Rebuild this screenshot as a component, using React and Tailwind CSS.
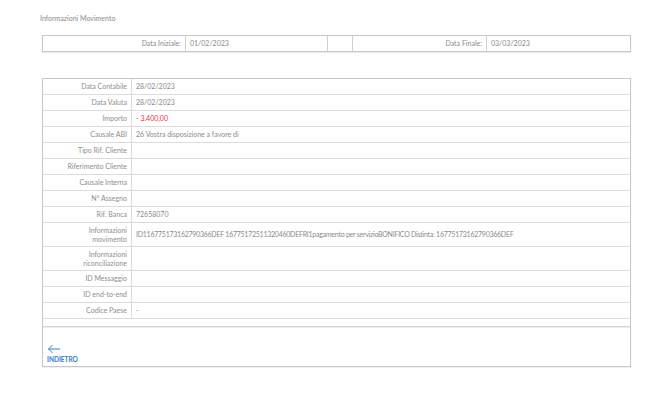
import React from "react"

const rows = [
  { label: "Data Contabile", value: "28/02/2023" },
  { label: "Data Valuta", value: "28/02/2023" },
  { label: "Importo", value: "- 3.400,00", red: true },
  { label: "Causale ABI", value: "26 Vostra disposizione a favore di" },
  { label: "Tipo Rif. Cliente", value: "" },
  { label: "Riferimento Cliente", value: "" },
  { label: "Causale Interna", value: "" },
  { label: "N° Assegno", value: "" },
  { label: "Rif. Banca", value: "72658070" },
  {
    label: ["Informazioni", "movimento"],
    value: "ID116775173162790366DEF 16775172511320460DEFRI1pagamento per servizioBONIFICO Distinta: 16775173162790366DEF",
    tight: true,
  },
  { label: ["Informazioni", "riconciliazione"], value: "" },
  { label: "ID Messaggio", value: "" },
  { label: "ID end-to-end", value: "" },
  { label: "Codice Paese", value: "-" },
]

function Row({ row }) {
  const double = Array.isArray(row.label)
  return (
    <div className={`flex border-b border-[#dcdcdc] ${double ? "h-[24px]" : "h-[16px]"}`}>
      <div className="w-[89px] shrink-0 border-r border-[#dcdcdc] flex flex-col items-end justify-center pr-[4px] text-right leading-[9px] text-[#8e8e8e]">
        {double ? row.label.map((l) => <span key={l}>{l}</span>) : <span>{row.label}</span>}
      </div>
      <div
        className={`flex items-center pl-[4px] ${row.red ? "text-[#e0383a]" : "text-[#8a8a8a]"} ${
          row.tight ? "tracking-[-0.25px]" : ""
        }`}
      >
        {row.value}
      </div>
    </div>
  )
}

export default function App() {
  return (
    <div className="w-[660px] h-[396px] bg-white text-[7px]" style={{ fontFamily: "Lato, 'Open Sans', sans-serif" }}>
      <div className="pl-[40px] pt-[13px] h-[35px] text-[#8a8a8a]">Informazioni Movimento</div>

      <div className="ml-[42px] w-[589px] h-[17px] flex border border-[#c8c8c8] shadow-[0_1px_1px_rgba(0,0,0,0.08)] text-[#8a8a8a]">
        <div className="w-[143px] border-r border-[#d0d0d0] flex items-center justify-end pr-[4px]">Data Iniziale:</div>
        <div className="w-[142px] border-r border-[#d0d0d0] flex items-center pl-[4px]">01/02/2023</div>
        <div className="w-[25px] border-r border-[#d0d0d0]"></div>
        <div className="w-[134px] border-r border-[#d0d0d0] flex items-center justify-end pr-[4px]">Data Finale:</div>
        <div className="flex-1 flex items-center pl-[4px]">03/03/2023</div>
      </div>

      <div className="ml-[42px] mt-[26px] w-[589px] border border-[#c8c8c8] shadow-[0_1px_1px_rgba(0,0,0,0.06)]">
        {rows.map((row, i) => (
          <Row key={i} row={row} />
        ))}
        <div className="h-[8px] border-b border-[#d4d4d4]"></div>
        <div className="h-[1px] bg-[#ececec]"></div>
        <div className="h-[38px] flex flex-col justify-end pl-[4px] pb-[2px] text-[#3a7bbf]">
          <svg width="14" height="10" viewBox="0 0 14 10" fill="none" stroke="#3a7bbf" strokeWidth="1" className="mb-[1px]">
            <path d="M13 5H1.5M5.5 1 1.5 5l4 4" />
          </svg>
          <span className="font-bold text-[6.5px] leading-[9px]">INDIETRO</span>
        </div>
      </div>
    </div>
  )
}
